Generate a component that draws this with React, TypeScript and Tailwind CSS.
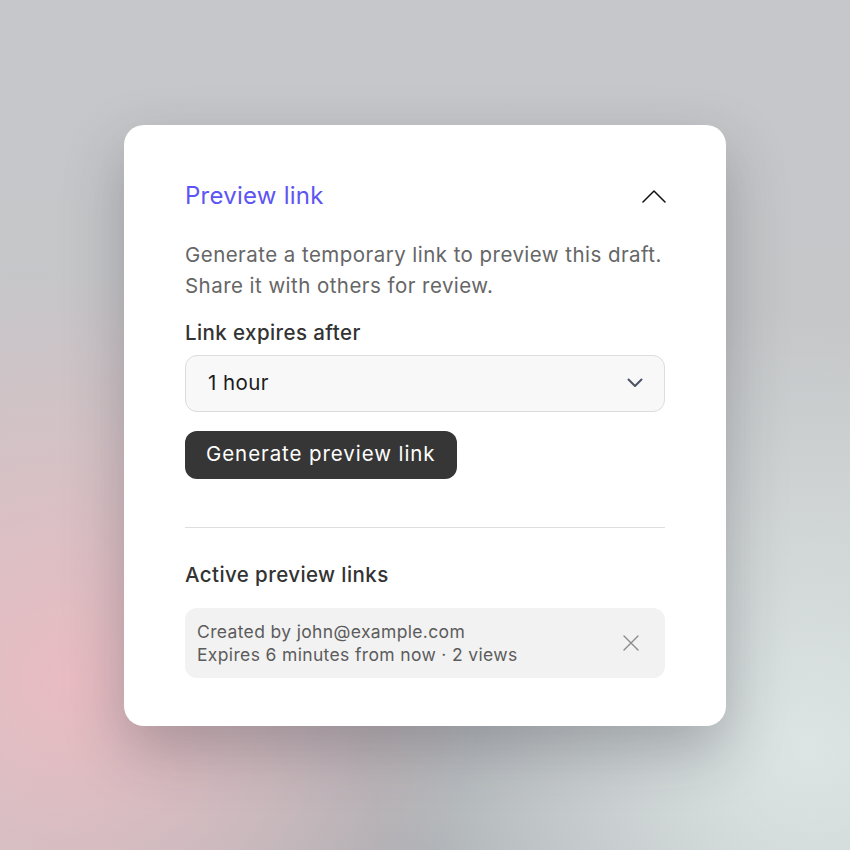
export default function App() {
    return (
        <div className="w-[850px] h-[850px] flex items-center justify-center bg-[#c6c7c9] bg-[radial-gradient(circle_at_8%_80%,#e9bcc2_0%,rgba(233,188,194,0)_40%),radial-gradient(circle_at_95%_88%,#dde5e4_0%,rgba(221,229,228,0)_40%),radial-gradient(circle_at_50%_100%,#a9adb1_0%,rgba(169,173,177,0)_45%),linear-gradient(180deg,#c6c7ca_0%,#c4c6c8_60%,#bfc3c5_100%)] font-['Inter',sans-serif]">
            <div className="w-[602px] rounded-[20px] bg-white px-[61px] pt-[50px] pb-[48px] shadow-[0_24px_60px_rgba(40,40,50,0.28)]">
                {/* Header */}
                <div className="flex items-center justify-between h-[42px]">
                    <h2 className="text-[24px] text-[#5d55f3] tracking-[0.01em]">Preview link</h2>
                    <svg width="24" height="14" viewBox="0 0 24 14" fill="none" className="mr-[-1px]">
                        <polyline points="1,13 12,2 23,13" stroke="#111" strokeWidth="1.5" strokeLinecap="round" strokeLinejoin="round" />
                    </svg>
                </div>

                <p className="mt-[22px] text-[20.5px] leading-[31px] tracking-[0.022em] text-[#666]">
                    Generate a temporary link to preview this draft.
                    <br />
                    Share it with others for review.
                </p>

                <label className="block mt-[18px] text-[20.5px] leading-[28px] tracking-[0.02em] font-medium text-[#333]">
                    Link expires after
                </label>
                <div className="mt-[8px] h-[57px] flex items-center justify-between rounded-[12px] border border-[#dcdcdc] bg-[#f8f8f8] pl-[22px] pr-[21px]">
                    <span className="text-[20.5px] tracking-[0.02em] text-[#1c1c1c]">1 hour</span>
                    <svg width="16" height="10" viewBox="0 0 16 10" fill="none">
                        <polyline points="1.5,1.5 8,8 14.5,1.5" stroke="#4b5563" strokeWidth="2" strokeLinecap="round" strokeLinejoin="round" />
                    </svg>
                </div>

                <button className="mt-[19px] h-[48px] px-[21px] rounded-[12px] bg-[#363636] text-white text-[20.5px] tracking-[0.045em]">
                    Generate preview link
                </button>

                <div className="mt-[48px] border-t border-[#dedede]" />

                <h3 className="mt-[33px] text-[20.5px] leading-[28px] tracking-[0.02em] font-medium text-[#333]">
                    Active preview links
                </h3>

                <div className="mt-[19px] h-[70px] flex items-center justify-between rounded-[12px] bg-[#f2f2f2] pl-[12px] pr-[26px]">
                    <div className="text-[17.5px] leading-[23px] tracking-[0.02em] text-[#5c5c5c]">
                        <div>Created by john@example.com</div>
                        <div>Expires 6 minutes from now · 2 views</div>
                    </div>
                    <svg width="16" height="16" viewBox="0 0 16 16" fill="none">
                        <path d="M1 1L15 15M15 1L1 15" stroke="#8a8a8a" strokeWidth="1.4" strokeLinecap="round" />
                    </svg>
                </div>
            </div>
        </div>
    );
}
